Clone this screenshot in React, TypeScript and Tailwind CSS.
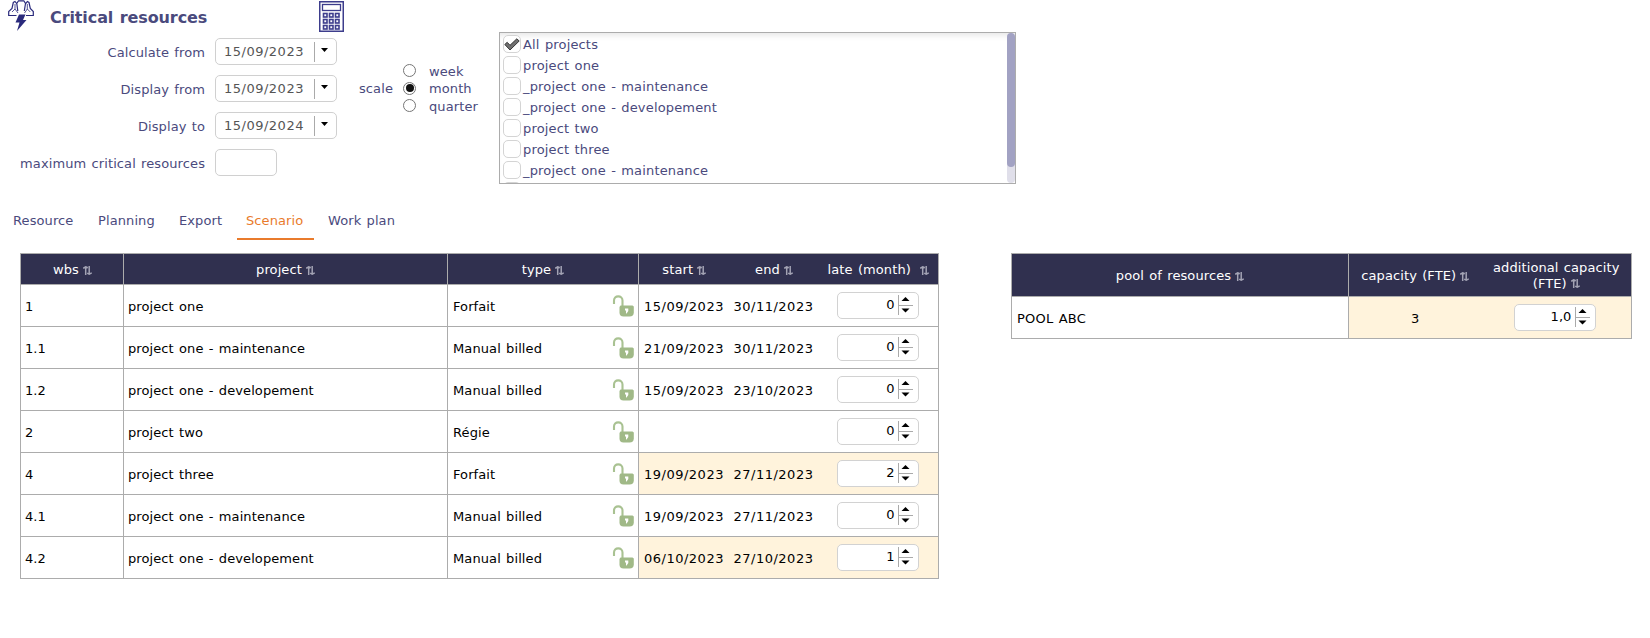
import React from "react";

const rows = [
  { wbs: "1", project: "project one", type: "Forfait", start: "15/09/2023", end: "30/11/2023", late: "0", changed: false },
  { wbs: "1.1", project: "project one - maintenance", type: "Manual billed", start: "21/09/2023", end: "30/11/2023", late: "0", changed: false },
  { wbs: "1.2", project: "project one - developement", type: "Manual billed", start: "15/09/2023", end: "23/10/2023", late: "0", changed: false },
  { wbs: "2", project: "project two", type: "Régie", start: "", end: "", late: "0", changed: false },
  { wbs: "4", project: "project three", type: "Forfait", start: "19/09/2023", end: "27/11/2023", late: "2", changed: true },
  { wbs: "4.1", project: "project one - maintenance", type: "Manual billed", start: "19/09/2023", end: "27/11/2023", late: "0", changed: false },
  { wbs: "4.2", project: "project one - developement", type: "Manual billed", start: "06/10/2023", end: "27/10/2023", late: "1", changed: true },
];

const projects = [
  "All projects",
  "project one",
  "_project one - maintenance",
  "_project one - developement",
  "project two",
  "project three",
  "_project one - maintenance",
  "",
];

function ResourceIcon() {
  return (
    <svg className="h-[32px] w-[28px] shrink-0" viewBox="0 0 28 32" fill="none" stroke="#2a2a7c" strokeWidth="1.2">
      <path d="M9.500 15.500H1.700V11.500L5 8.500L6.300 2.500L8 1.500L10 4M10.800 11L9.800 3.500L11.500 0.800H16.800L18.500 3.500L17.300 11M18.500 4L20.300 1.500L22 2.500L23.300 8.500L26.300 11.500V15.500H19" />
      <path d="M8 4V9L5 12M20.300 4V9L23.300 12M8 9L11 13M20.300 9L17.500 13" strokeWidth="0.800" />
      <path d="M12 14.500H18.500L16 20H19.500L10 31L12.500 22.500H8.500Z" fill="#2a2a7c" stroke="none" />
    </svg>
  );
}

function CalculatorIcon() {
  return (
    <svg className="h-[31px] w-[25px] shrink-0" viewBox="0 0 25 31" fill="none" stroke="#3d3d8c">
      <rect x="0.750" y="0.750" width="23.500" height="29.500" strokeWidth="1.5" />
      <rect x="3.500" y="3.500" width="18" height="6" strokeWidth="1.3" />
      {[12.5, 18.5, 24.5].map((y) =>
        [4.5, 10.5, 16.5].map((x) => <rect key={`${x}-${y}`} x={x} y={y} width="3.500" height="3.500" strokeWidth="1.6" />),
      )}
    </svg>
  );
}

function SortIcon() {
  return (
    <svg className="h-[9px] w-[9px] shrink-0" viewBox="0 0 9 9" fill="none" stroke="#a3a3b4" strokeWidth="1.500">
      <path d="M2.700 9V1M0.200 2.300L2.700 0.800L4.800 1.800M6.200 0V8M4.200 7.200L6.200 8.200L8.800 6.800" />
    </svg>
  );
}

function LockIcon() {
  return (
    <svg className="h-[22px] w-[22px] shrink-0" viewBox="0 0 22 22" fill="none">
      <path d="M2 9V5.500C2 2.800 3.700 1.400 6.200 1.400S10.500 2.800 10.500 5.500V11" stroke="#a9c292" strokeWidth="2.100" />
      <path d="M8.500 10.500H20.500L21.800 11.500V17.500Q21.800 21.600 17.500 21.600H11.500Q7.500 21.600 7.500 17.500V12Z" fill="#a0b987" />
      <path d="M13 13.500H16.300V16L14.600 18.500H14V16L13 15Z" fill="#fff" />
    </svg>
  );
}

function DateBox({ value }: { value: string }) {
  return (
    <div className="flex h-[27px] w-[122px] items-center rounded-[5px] border border-[#d0d0d0] bg-white pl-2">
      <span className="w-[90px] tracking-[0.500px] text-[#555]">{value}</span>
      <span className="h-5 w-px bg-[#aaa]" />
      <svg className="mb-[4px] ml-[6px] h-[4px] w-[7px]" viewBox="0 0 7 4"><path d="M0 0H7L3.500 4Z" fill="#000" /></svg>
    </div>
  );
}

function Spinner({ value }: { value: string }) {
  return (
    <div className="flex h-[27px] w-[82px] items-start rounded-[5px] border border-[#d2d2d2] bg-white pt-[2px]">
      <span className="w-[57px] pt-[2px] text-right text-black">{value}</span>
      <svg className="ml-[3px] h-[20px] w-[15px]" viewBox="0 0 15 20">
        <path d="M0.500 0V20M1 10.500H15" stroke="#aaa" fill="none" />
        <path d="M7.500 2L11.500 6H3.500ZM3.500 13.500H11.500L7.500 17.500Z" fill="#000" />
      </svg>
    </div>
  );
}

const fields = [
  { label: "Calculate from", value: "15/09/2023" },
  { label: "Display from", value: "15/09/2023" },
  { label: "Display to", value: "15/09/2024" },
];

const tabs = [
  { label: "Resource", box: "w-[85px]" },
  { label: "Planning", box: "w-[81px]" },
  { label: "Export", box: "w-[67px]" },
  { label: "Scenario", box: "w-[82px]" },
  { label: "Work plan", box: "w-[90px]" },
];

function Head({ label, gap = "gap-1" }: { label: string; gap?: string }) {
  return (
    <div className={`flex items-center justify-center ${gap}`}>
      <span>{label}</span>
      <SortIcon />
    </div>
  );
}

export default function App() {
  return (
    <div className="h-[638px] w-[1650px] overflow-hidden whitespace-nowrap bg-white font-['DejaVu_Sans',sans-serif] text-[13px] leading-[16px] tracking-[0.100px] text-[#4a4a7d] [word-spacing:1px]">
      <div className="flex h-[200px]">
        <div className="w-[345px]">
          <div className="flex h-[38px] items-start pl-[7px]">
            <ResourceIcon />
            <h1 className="ml-[15px] mt-[8px] w-[269px] text-[16px] font-bold leading-[20px] tracking-[-0.100px]">Critical resources</h1>
            <div className="pt-px"><CalculatorIcon /></div>
          </div>
          <div className="flex flex-col gap-[10px]">
            {fields.map((f) => (
              <div key={f.label} className="flex items-center">
                <span className="w-[205px] pt-[2px] text-right">{f.label}</span>
                <div className="ml-[10px]"><DateBox value={f.value} /></div>
              </div>
            ))}
            <div className="flex items-center">
              <span className="w-[205px] pt-[2px] text-right">maximum critical resources</span>
              <div className="ml-[10px] h-[27px] w-[62px] rounded-[5px] border border-[#d0d0d0]" />
            </div>
          </div>
        </div>
        <div className="flex w-[154px] items-start pl-[14px] pt-[62px]">
          <span className="mt-[19px] w-[44px]">scale</span>
          <div className="flex flex-col">
            {["week", "month", "quarter"].map((s) => (
              <div key={s} className="flex h-[17.500px] items-center">
                <span className="flex size-[13px] items-center justify-center rounded-full border border-[#767676]">
                  {s === "month" && <span className="size-[8px] rounded-full bg-[#111]" />}
                </span>
                <span className="ml-[13px] pt-[2px]">{s}</span>
              </div>
            ))}
          </div>
        </div>
        <div className="mt-8 flex h-[152px] w-[517px] justify-between overflow-hidden border border-[#acacac] shadow-[inset_0_6px_6px_-4px_#e4e4e4]">
          <div className="flex flex-col gap-[3px] pl-[3px] pt-[2px]">
            {projects.map((p, i) => (
              <div key={i} className="flex h-[18px] shrink-0 items-center">
                <span className="flex size-[18px] items-center justify-center rounded-[5px] border border-[#d4d4d4] bg-white">
                  {i === 0 && (
                    <svg className="h-[13px] w-[16px]" viewBox="0 0 16 13"><path d="M0.800 6.500L3.200 4.300L6 7.300L12.800 0.800L15.200 3L6 12Z" fill="#707070" stroke="#383838" /></svg>
                  )}
                </span>
                <span className="ml-[2px] pt-[2px] tracking-[0.160px]">{p}</span>
              </div>
            ))}
          </div>
          <div className="h-[150px] w-[8px] rounded-full bg-[#e0dfea]">
            <div className="h-[134px] w-[8px] rounded-full bg-[#a2a2c3]" />
          </div>
        </div>
      </div>

      <div className="flex h-[53px] pl-[13px]">
        {tabs.map((t) => (
          <div key={t.label} className={`${t.box} pt-[13px]`}>
            {t.label === "Scenario" ? (
              <div className="-ml-[9px] h-[27px] w-[77px] border-b-2 border-[#e97b2c] pl-[9px] text-[#e97b2c]">{t.label}</div>
            ) : (
              t.label
            )}
          </div>
        ))}
      </div>

      <div className="flex items-start pl-5 text-black">
        <table className="w-[919px] table-fixed border-collapse">
          <colgroup>
            <col className="w-[103px]" />
            <col className="w-[324px]" />
            <col className="w-[191px]" />
            <col className="w-[90px]" />
            <col className="w-[90px]" />
            <col className="w-[120px]" />
          </colgroup>
          <thead>
            <tr className="h-[31px] border border-[#acacac] bg-[#30304f] text-white">
              <th className="border border-[#acacac] p-0 pl-px pt-[2px] font-normal"><Head label="wbs" /></th>
              <th className="border border-[#acacac] p-0 pt-[2px] font-normal"><Head label="project" /></th>
              <th className="border border-[#acacac] p-0 pt-[2px] font-normal"><Head label="type" /></th>
              <th className="p-0 pl-px pt-[2px] font-normal"><Head label="start" /></th>
              <th className="p-0 pl-px pt-[2px] font-normal"><Head label="end" /></th>
              <th className="p-0 pt-[2px] font-normal"><Head label="late (month)" gap="gap-[9px]" /></th>
            </tr>
          </thead>
          <tbody>
            {rows.map((r) => (
              <tr key={r.wbs} className="h-[42px] border border-[#acacac]">
                <td className="border border-[#acacac] p-0 pl-1 pt-[2px]">{r.wbs}</td>
                <td className="border border-[#acacac] p-0 pl-1 pt-[2px]">{r.project}</td>
                <td className="border border-[#acacac] p-0">
                  <div className="flex items-center justify-between pl-[5px] pr-[4px]">
                    <span className="pt-[2px]">{r.type}</span>
                    <LockIcon />
                  </div>
                </td>
                <td className={`p-0 pl-[5px] pt-[2px] tracking-[0.500px] ${r.changed ? "bg-[#fff3dc]" : ""}`}>{r.start}</td>
                <td className={`p-0 pl-[5px] pt-[2px] tracking-[0.500px] ${r.changed ? "bg-[#fff3dc]" : ""}`}>{r.end}</td>
                <td className={`p-0 pl-[18px] ${r.changed ? "bg-[#fff3dc]" : ""}`}><Spinner value={r.late} /></td>
              </tr>
            ))}
          </tbody>
        </table>

        <table className="ml-[72px] w-[621px] table-fixed border-collapse">
          <colgroup>
            <col className="w-[337px]" />
            <col className="w-[133px]" />
            <col className="w-[150px]" />
          </colgroup>
          <thead>
            <tr className="h-[43px] border border-[#acacac] bg-[#30304f] text-white">
              <th className="border border-[#acacac] p-0 pt-[2px] font-normal"><Head label="pool of resources" /></th>
              <th className="p-0 pt-[2px] font-normal"><Head label="capacity (FTE)" /></th>
              <th className="p-0 pt-px font-normal">
                <div>additional capacity</div>
                <Head label="(FTE)" />
              </th>
            </tr>
          </thead>
          <tbody>
            <tr className="h-[42px] border border-[#acacac]">
              <td className="border border-[#acacac] p-0 pl-[5px] pt-[2px] tracking-[0.200px]">POOL ABC</td>
              <td className="bg-[#fff3dc] p-0 pt-[2px] text-center">3</td>
              <td className="bg-[#fff3dc] p-0 pl-[32px]"><Spinner value="1,0" /></td>
            </tr>
          </tbody>
        </table>
      </div>
    </div>
  );
}
